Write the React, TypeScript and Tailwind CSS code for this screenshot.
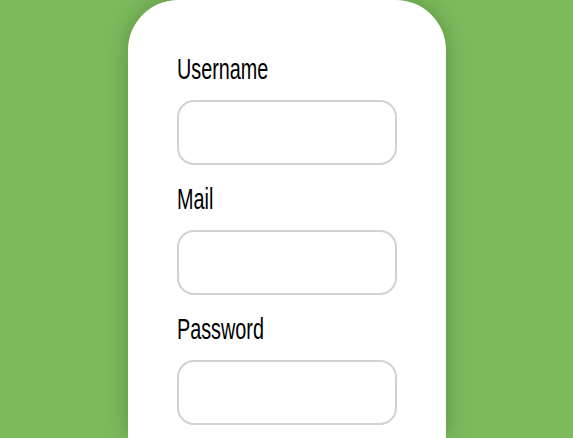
export default function App() {
  const fields = ["Username", "Mail", "Password"];

  return (
    <div className="flex h-[438px] w-full justify-center overflow-hidden bg-[#7dba5d]">
      <div className="w-[318px] shrink-0 rounded-t-[50px] bg-white px-[49px] pt-[52px] shadow-[0_0_22px_rgba(30,70,10,0.35)]">
        {fields.map((name) => (
          <div key={name} className="mb-[17px]">
            <label
              className="block origin-left scale-x-[0.66] text-[30px] leading-[34px] text-black"
              style={{ fontFamily: '"Liberation Sans", Arial, sans-serif' }}
            >
              {name}
            </label>
            <input
              type={name === "Password" ? "password" : "text"}
              className="mt-[14px] block h-[65px] w-[220px] rounded-[17px] border-2 border-[#d2d2d2] bg-white outline-none"
            />
          </div>
        ))}
      </div>
    </div>
  );
}
